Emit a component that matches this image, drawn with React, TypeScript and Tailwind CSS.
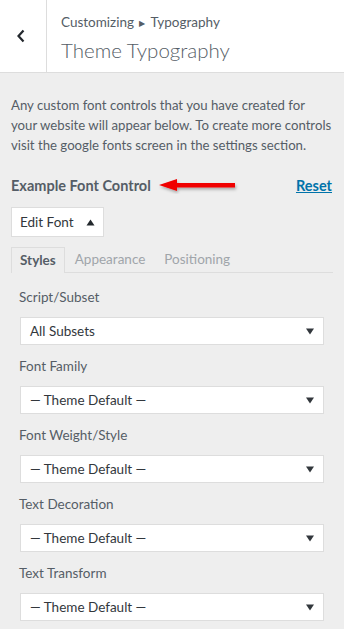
import React from "react";

const font = { fontFamily: 'Lato, "Noto Sans", sans-serif' };

function Select({ value }: { value: string }) {
  return (
    <div className="ml-[20px] mr-[20px] h-[28px] bg-white border border-[#dddddd] flex items-center justify-between pl-[9px] pr-[9px] text-[13.5px] text-[#32373c]">
      <span>{value}</span>
      <svg width="8" height="8" viewBox="0 0 8 8"><path d="M0 1.5 L8 1.5 L4 7.5 Z" fill="#32373c" /></svg>
    </div>
  );
}

function Field({ label, value }: { label: string; value: string }) {
  return (
    <div className="flex flex-col gap-[10px]">
      <div className="px-[19px] h-[20px] flex items-center text-[13.5px] text-[#555d66]">{label}</div>
      <Select value={value} />
    </div>
  );
}

export default function App() {
  return (
    <div className="w-[344px] h-[629px] bg-[#eeeeee] overflow-hidden" style={font}>
      <div className="h-[73px] bg-white border-b border-[#dddddd] flex">
        <div className="w-[47px] border-r border-[#dddddd] flex items-center justify-center">
          <svg width="10" height="14" viewBox="0 0 10 14" className="ml-[-4px]">
            <path d="M7.5 1.5 L2.5 7 L7.5 12.5" fill="none" stroke="#23282d" strokeWidth="2.2" />
          </svg>
        </div>
        <div className="pl-[14px] pt-[12px]">
          <div className="text-[13.5px] text-[#555d66] leading-[20px]">
            Customizing <span className="text-[8px] relative top-[-1px] mx-[2px]">▶</span> Typography
          </div>
          <div className="text-[20.5px] text-[#555d66] font-light leading-[28px] mt-[2px]">Theme Typography</div>
        </div>
      </div>
      <div className="px-[11px] pt-[22px] text-[13.2px] leading-[20px] text-[#555d66] whitespace-nowrap">
        <div>Any custom font controls that you have created for</div>
        <div>your website will appear below. To create more controls</div>
        <div>visit the google fonts screen in the settings section.</div>
      </div>
      <div className="flex items-center justify-between pl-[11px] pr-[12px] mt-[20px] h-[22px]">
        <div className="flex items-center">
          <span className="text-[14.5px] font-bold text-[#555d66]">Example Font Control</span>
          <svg width="84" height="16" viewBox="0 0 84 16" className="ml-[6px]">
            <defs>
              <filter id="sh" x="-10%" y="-50%" width="120%" height="200%">
                <feDropShadow dx="1" dy="2" stdDeviation="1.5" floodColor="#000" floodOpacity="0.3" />
              </filter>
            </defs>
            <g filter="url(#sh)">
              <polygon points="2,7 20,1 20,5 78,5 78,9.5 20,9.5 20,13" fill="#f00000" />
            </g>
          </svg>
        </div>
        <a className="text-[14.5px] font-bold text-[#0073aa] underline">Reset</a>
      </div>
      <div className="px-[11px] mt-[10px]">
        <div className="inline-flex items-center h-[30px] bg-white border border-[#dddddd] px-[8px] text-[13.5px] text-[#32373c]">
          Edit Font
          <svg width="9" height="7" viewBox="0 0 9 7" className="ml-[12px]"><path d="M0.5 6.5 L4.5 0.5 L8.5 6.5 Z" fill="#23282d" /></svg>
        </div>
      </div>
      <div className="mx-[11px] mt-[10px] flex border-b border-[#dddddd] h-[26px] text-[13.5px]">
        <div className="px-[8px] border border-b-0 border-[#dddddd] flex items-center font-bold text-[#555d66] mb-[-1px] bg-[#eeeeee]">Styles</div>
        <div className="px-[10px] flex items-center text-[#a0a5aa]">Appearance</div>
        <div className="px-[9px] flex items-center text-[#a0a5aa]">Positioning</div>
      </div>
      <div className="pt-[14px] flex flex-col gap-[11px]">
        <Field label="Script/Subset" value="All Subsets" />
        <Field label="Font Family" value="— Theme Default —" />
        <Field label="Font Weight/Style" value="— Theme Default —" />
        <Field label="Text Decoration" value="— Theme Default —" />
        <Field label="Text Transform" value="— Theme Default —" />
      </div>
    </div>
  );
}
